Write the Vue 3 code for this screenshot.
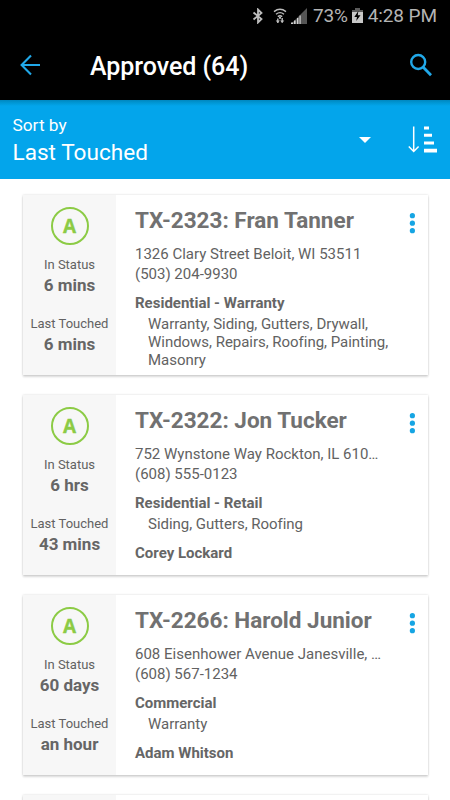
<script setup>
import { ref } from 'vue';

const jobs = ref([
  {
    id: 'TX-2323',
    name: 'Fran Tanner',
    address: '1326 Clary Street Beloit, WI 53511',
    phone: '(503) 204-9930',
    type: 'Residential - Warranty',
    trades: 'Warranty, Siding, Gutters, Drywall, Windows, Repairs, Roofing, Painting, Masonry',
    inStatus: '6 mins',
    touched: '6 mins',
  },
  {
    id: 'TX-2322',
    name: 'Jon Tucker',
    address: '752 Wynstone Way Rockton, IL 610…',
    phone: '(608) 555-0123',
    type: 'Residential - Retail',
    trades: 'Siding, Gutters, Roofing',
    assignee: 'Corey Lockard',
    inStatus: '6 hrs',
    touched: '43 mins',
  },
  {
    id: 'TX-2266',
    name: 'Harold Junior',
    address: '608 Eisenhower Avenue Janesville, …',
    phone: '(608) 567-1234',
    type: 'Commercial',
    trades: 'Warranty',
    assignee: 'Adam Whitson',
    inStatus: '60 days',
    touched: 'an hour',
  },
]);
</script>

<template>
  <div class="screen">
    <div class="status-bar">
      <svg class="bluetooth" width="12" height="16" viewBox="0 0 12 16">
        <path d="M1.5 4.5 9.5 11 6 14.5V1.5L9.5 5 1.5 11.5" fill="none" stroke="#bdbdbd" stroke-width="1.8" />
      </svg>
      <svg class="wifi" width="14" height="16" viewBox="0 0 14 16">
        <g fill="none" stroke="#bdbdbd" stroke-width="1.4">
          <path d="M1 3.6Q7-1 13 3.6M3 6.2Q7 3 11 6.2M4.8 8.6Q7 6.9 9.2 8.6" />
          <path d="M4.8 15V10.5M9.2 10v4.5" />
        </g>
        <path d="M2.7 12.4h4.2L4.8 15zM7.1 12.4h4.2L9.2 15zM6 8.8h2v2H6z" fill="#bdbdbd" />
      </svg>
      <svg class="signal" width="16" height="16" viewBox="0 0 16 16">
        <path d="M0 16 16 0v16z" fill="#555" />
        <path d="M0 14.5h2V16H0zM3 12.5h1.6V16H3zM6 10h1.4v6H6zM8.5 7.5h1.2V16H8.5z" fill="#d0d0d0" />
      </svg>
      <span class="percent">73%</span>
      <svg class="battery" width="11" height="15" viewBox="0 0 11 15">
        <path d="M3 0h5v2h3v3H0V2h3z" fill="#5c5c5c" />
        <path d="M0 4h11v11H0z" fill="#c8c8c8" />
        <path d="M6.3 3 2.3 8.9h2.7L4.2 13 8.5 7.3H5.8z" fill="#000" />
      </svg>
      <span class="clock">4:28 PM</span>
    </div>

    <header class="app-bar">
      <svg class="back" width="22" height="22" viewBox="0 0 22 22">
        <path d="M11 1.5 1.6 11l9.4 9.5M1.6 11H20" fill="none" stroke="#21a8e8" stroke-width="2.1" />
      </svg>
      <h1>Approved (64)</h1>
      <svg class="search" width="24" height="24" viewBox="0 0 24 24">
        <circle cx="9.2" cy="9" r="7" fill="none" stroke="#21a8e8" stroke-width="2.4" />
        <path d="M14 14l8 8.2" stroke="#21a8e8" stroke-width="2.8" />
      </svg>
    </header>

    <section class="sort-bar">
      <div class="sort-text">
        <div class="sort-label">Sort by</div>
        <div class="sort-value">Last Touched</div>
      </div>
      <svg class="caret" width="12" height="6" viewBox="0 0 12 6">
        <path d="M0 0h12L6 6z" fill="#fff" />
      </svg>
      <svg class="sort-icon" width="30" height="27" viewBox="0 0 30 27">
        <path d="M5.7 0.5v25M.8 20.5l4.9 5 4.9-5" fill="none" stroke="#fff" stroke-width="1.5" />
        <path d="M16 .5h5v3h-5zM16 7.8h8v3h-8zM16 15.4h10v3H16zM16 22.8h13v3.6H16z" fill="#fff" />
      </svg>
    </section>

    <main class="list">
      <article v-for="job in jobs" :key="job.id" class="card">
        <aside class="side">
          <div class="badge">A</div>
          <div class="label">In Status</div>
          <div class="value">{{ job.inStatus }}</div>
          <div class="label touched">Last Touched</div>
          <div class="value">{{ job.touched }}</div>
        </aside>
        <div class="body">
          <h2>{{ job.id }}: {{ job.name }}</h2>
          <div class="contact address">{{ job.address }}</div>
          <div class="contact phone">{{ job.phone }}</div>
          <div class="type">{{ job.type }}</div>
          <div class="trades">{{ job.trades }}</div>
          <div v-if="job.assignee" class="assignee">{{ job.assignee }}</div>
        </div>
        <svg class="more" width="6" height="21" viewBox="0 0 6 21">
          <g fill="#16a5e3">
            <circle cx="3.4" cy="2.7" r="2.6" />
            <circle cx="3.4" cy="10.2" r="2.6" />
            <circle cx="3.4" cy="17.7" r="2.6" />
          </g>
        </svg>
      </article>
      <!-- next card, cut off by the bottom edge -->
      <article class="card">
        <aside class="side"></aside>
      </article>
    </main>
  </div>
</template>

<style>
body {
  background: #fff;
  overflow: hidden;
}
</style>

<style scoped>
.screen {
  width: 450px;
  height: 800px;
  overflow: hidden;
  background: #fff;
  font-family: Roboto, 'Liberation Sans', sans-serif;
  color: #626262;
  display: flex;
  flex-direction: column;
}
svg {
  display: block;
  flex: none;
}
.status-bar {
  height: 31px;
  flex: none;
  box-sizing: border-box;
  padding-left: 252px;
  background: #000;
  color: #b4b4b4;
  display: flex;
  align-items: center;
  font-size: 19px;
  white-space: nowrap;
}
.wifi {
  margin-left: 9px;
}
.signal {
  margin-left: 4px;
}
.percent {
  margin-left: 6px;
  letter-spacing: -0.2px;
}
.battery {
  margin-left: 4px;
}
.clock {
  margin-left: 5px;
  letter-spacing: -0.1px;
}
.app-bar {
  height: 69px;
  flex: none;
  box-sizing: border-box;
  background: #000;
  display: flex;
  align-items: center;
  padding: 0 17px 2px 20px;
}
.app-bar h1 {
  margin: 4px auto 0 48px;
  font-size: 25px;
  font-weight: 500;
  line-height: 30px;
  letter-spacing: -0.05px;
  color: #fff;
}
.sort-bar {
  height: 79px;
  flex: none;
  box-sizing: border-box;
  padding: 0 12px;
  display: flex;
  align-items: center;
  color: #fff;
  background: linear-gradient(#0087bf, #0098d6 3px, #03a5eb 6px);
}
.sort-text {
  flex: 1;
  padding: 2px 0 0 0.5px;
}
.sort-label {
  font-size: 17.3px;
  line-height: 24px;
}
.sort-value {
  font-size: 22.6px;
  line-height: 31px;
}
.caret {
  margin-right: 37px;
}
.list {
  padding: 16px 22px 0 23px;
  display: flex;
  flex-direction: column;
  gap: 20px;
}
.card {
  height: 180px;
  flex: none;
  display: flex;
  background: #fff;
  box-shadow: 0 0 2px rgba(0, 0, 0, 0.16), 0 2px 2px rgba(0, 0, 0, 0.14);
}
.side {
  width: 93px;
  flex: none;
  box-sizing: border-box;
  padding: 12px 0 0;
  background: #f7f7f7;
  text-align: center;
}
.badge {
  width: 38px;
  height: 38px;
  box-sizing: border-box;
  margin: 0 auto 12px;
  border: 2px solid #8ccb45;
  border-radius: 50%;
  color: #8ccb45;
  font: bold 19px/34px 'Open Sans', sans-serif;
  -webkit-text-stroke: 0.3px #8ccb45;
}
.label {
  font-size: 13px;
  line-height: 16px;
}
.label.touched {
  margin-top: 21px;
}
.value {
  margin-top: 2px;
  font-size: 17px;
  font-weight: bold;
  line-height: 20px;
  color: #666;
}
.body {
  flex: 1;
  min-width: 0;
  padding: 10px 0 0 19px;
  font-size: 15px;
}
.body h2 {
  margin: 0 0 9px;
  font-size: 22.5px;
  font-weight: bold;
  line-height: 30px;
  color: #717171;
  white-space: nowrap;
}
.contact {
  line-height: 20px;
  white-space: nowrap;
}
.type {
  margin-top: 9px;
  font-weight: bold;
  line-height: 20px;
  color: #666;
}
.trades {
  margin-top: 2px;
  padding-left: 13px;
  line-height: 18px;
  letter-spacing: -0.03px;
}
.assignee {
  margin-top: 10px;
  font-weight: bold;
  line-height: 20px;
  color: #666;
}
.more {
  margin: 18px 13px 0 0;
}
</style>
